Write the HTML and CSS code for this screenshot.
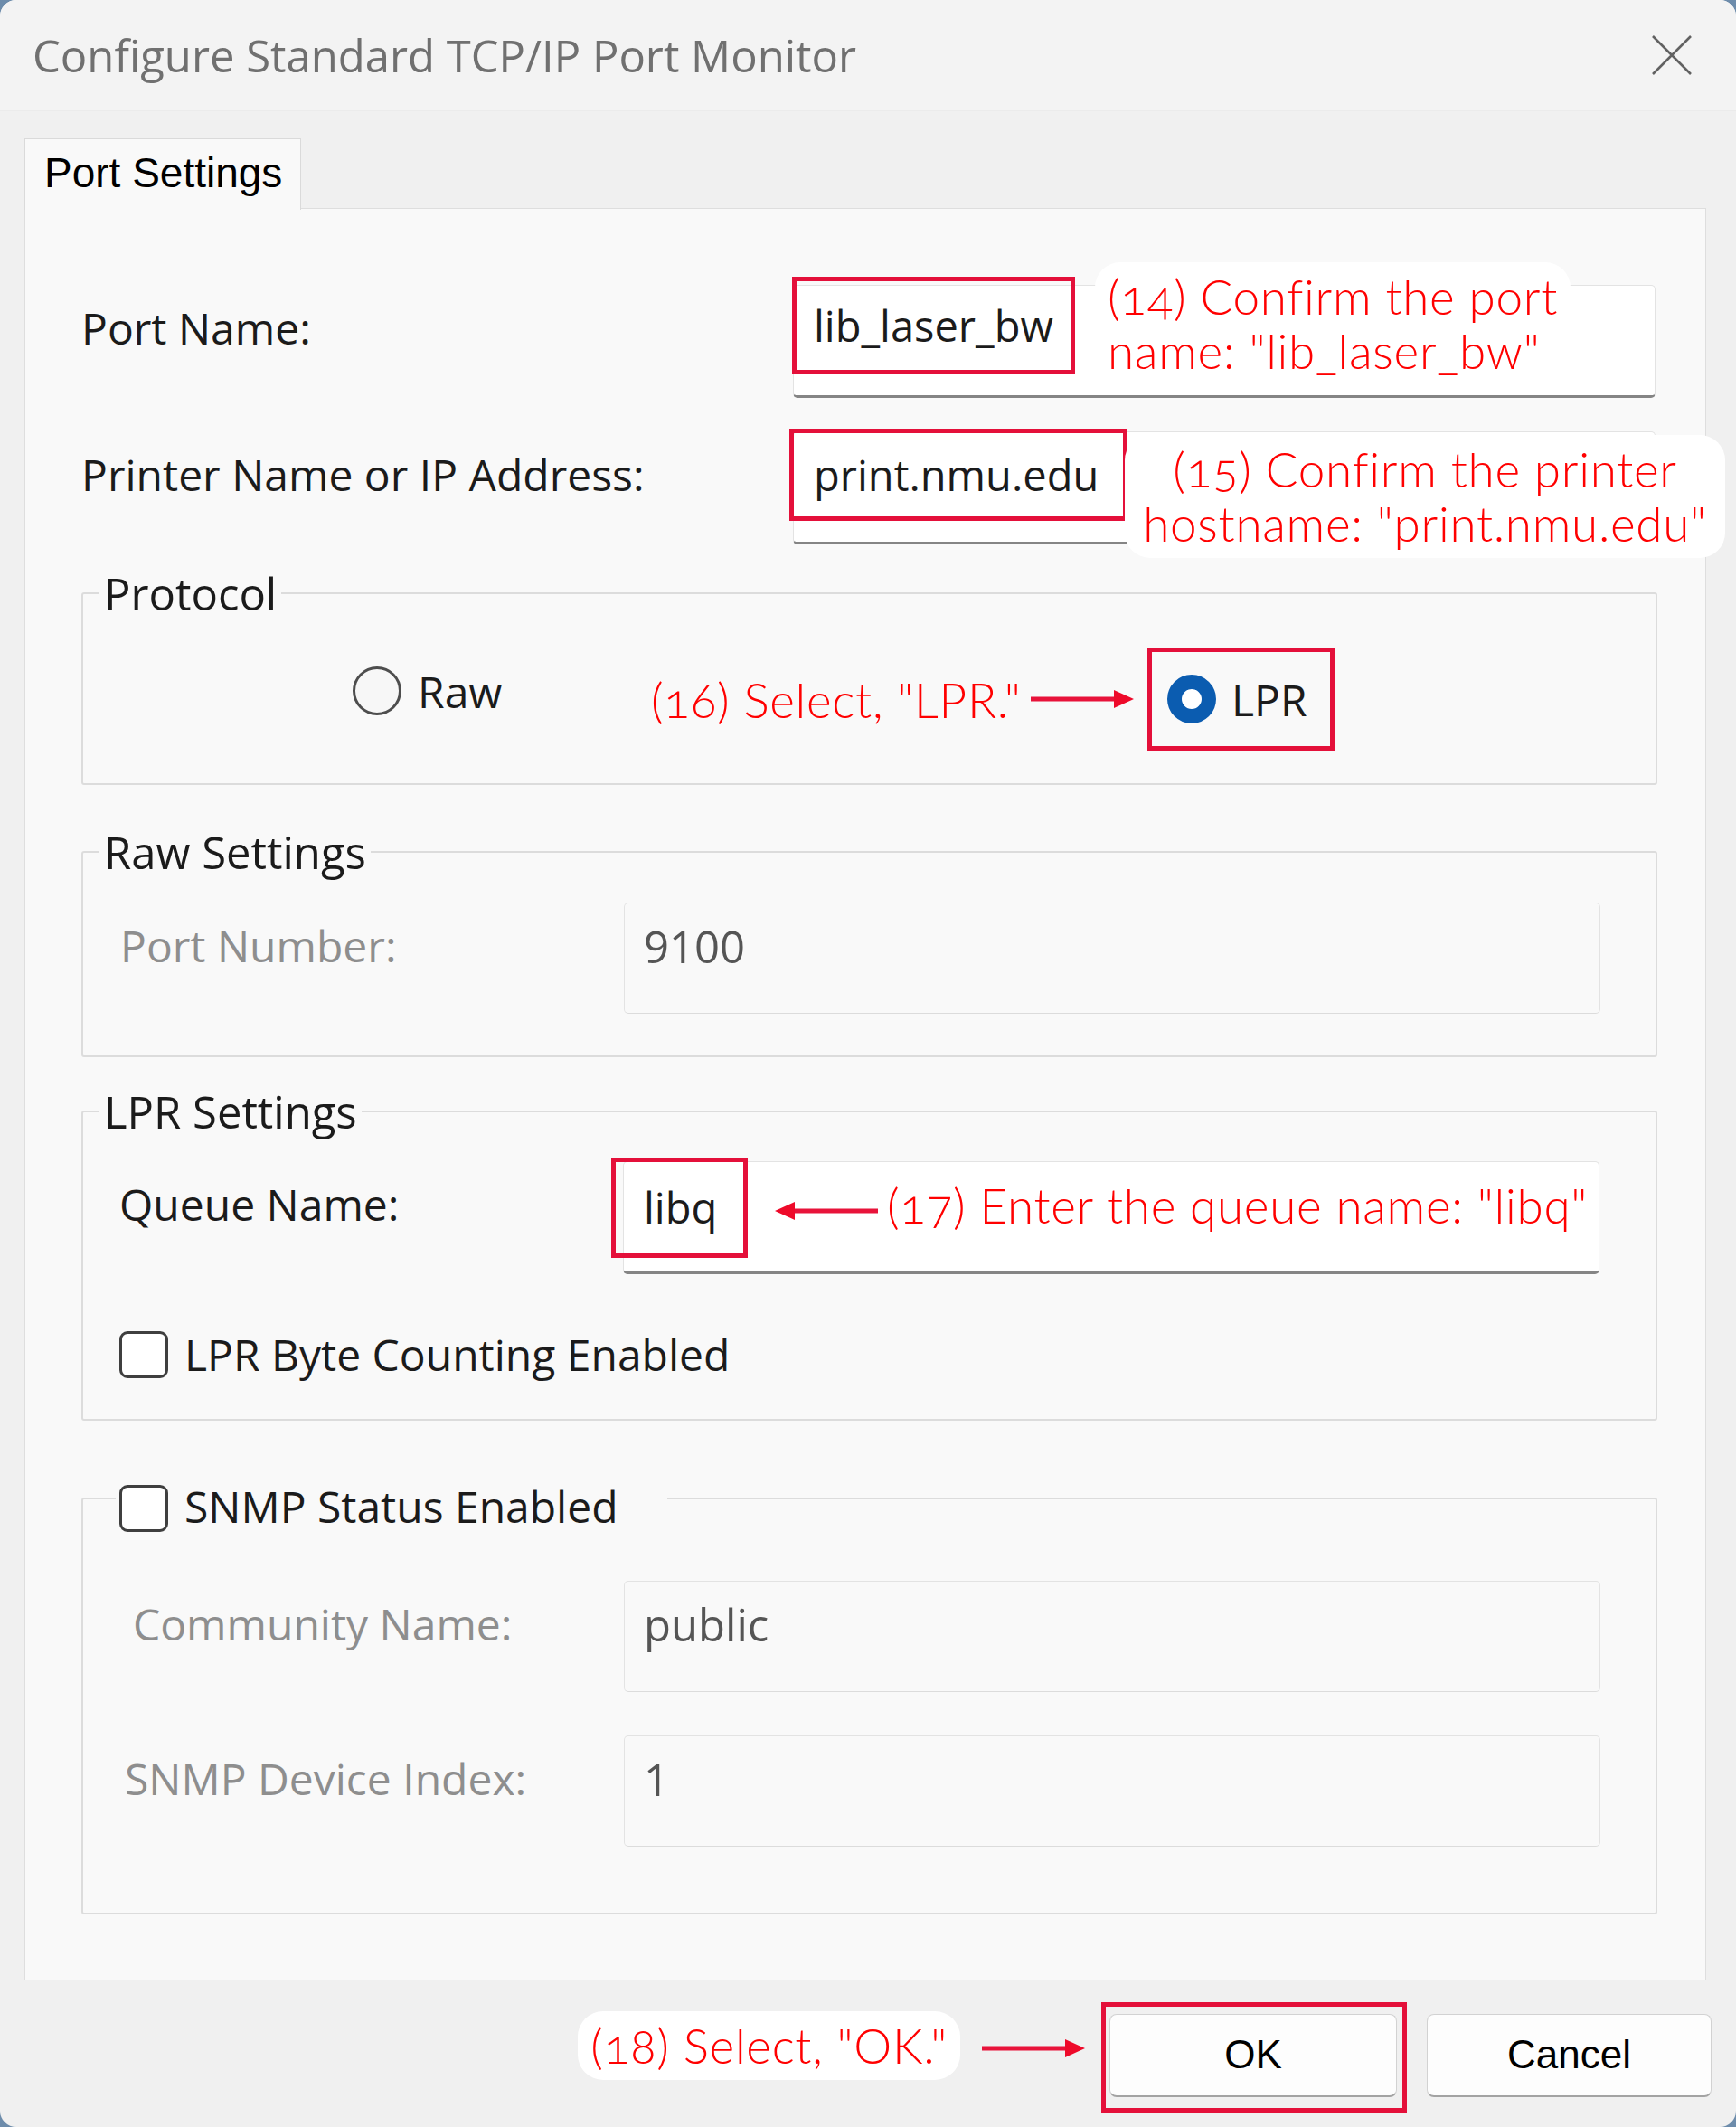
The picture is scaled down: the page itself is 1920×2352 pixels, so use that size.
FILE: index.html
```html
<html>
    <head>
        <title>Configure Standard TCP/IP Port Monitor</title>
        <link rel="stylesheet" href="styles.css">
    </head>
    <body>
        <div id="titlebar">
            <h1 id="title">Configure Standard TCP/IP Port Monitor</h1>
            <div id="close">
                <svg width="46" height="46" viewBox="0 0 46 46"><path d="M2 2 L44 44 M44 2 L2 44" stroke="#616161" stroke-width="2.6" fill="none"/></svg>
            </div>
        </div>
        <div id="main">
            <div class="tabs">
                <div class="tab">Port Settings</div>
            </div>
            <div class="panel">
                <div class="row row-name">
                    <div class="label">Port Name:</div>
                    <div class="field">
                        <span class="mark mark-name">lib_laser_bw</span>
                        <div class="note note-name">(14) Confirm the port<br>name: "lib_laser_bw"</div>
                    </div>
                </div>
                <div class="row row-host">
                    <div class="label">Printer Name or IP Address:</div>
                    <div class="field">
                        <span class="mark mark-host">print.nmu.edu</span>
                        <div class="note note-host">(15) Confirm the printer<br>hostname: "print.nmu.edu"</div>
                    </div>
                </div>

                <fieldset class="group protocol">
                    <legend>Protocol</legend>
                    <div class="group-body">
                        <div class="radios">
                            <div class="opt opt-raw"><span class="radio"></span>Raw</div>
                            <div class="step step-lpr">(16) Select, "LPR."</div>
                            <svg class="arrow" width="114" height="24" viewBox="0 0 114 24"><path d="M0 12 H96" stroke="#e8133a" stroke-width="5"/><path d="M92 2 L114 12 L92 22 Z" fill="#ee0a2a"/></svg>
                            <div class="opt opt-lpr mark"><span class="radio checked"></span>LPR</div>
                        </div>
                    </div>
                </fieldset>

                <fieldset class="group raw">
                    <legend>Raw Settings</legend>
                    <div class="group-body">
                        <div class="grid-row">
                            <div class="label off">Port Number:</div>
                            <div class="field disabled">9100</div>
                        </div>
                    </div>
                </fieldset>

                <fieldset class="group lpr">
                    <legend>LPR Settings</legend>
                    <div class="group-body">
                        <div class="grid-row">
                            <div class="label">Queue Name:</div>
                            <div class="field queue">
                                <span class="mark mark-queue">libq</span>
                                <svg class="arrow arrow-left" width="114" height="24" viewBox="0 0 114 24"><path d="M18 12 H114" stroke="#e8133a" stroke-width="5"/><path d="M22 2 L0 12 L22 22 Z" fill="#ee0a2a"/></svg>
                                <span class="step">(17) Enter the queue name: "libq"</span>
                            </div>
                        </div>
                        <div class="check-row"><span class="check"></span>LPR Byte Counting Enabled</div>
                    </div>
                </fieldset>

                <fieldset class="group snmp">
                    <legend><span class="check"></span>SNMP Status Enabled</legend>
                    <div class="group-body">
                        <div class="grid-row">
                            <div class="label off community">Community Name:</div>
                            <div class="field disabled">public</div>
                        </div>
                        <div class="grid-row">
                            <div class="label off device">SNMP Device Index:</div>
                            <div class="field disabled">1</div>
                        </div>
                    </div>
                </fieldset>
            </div>
            <div class="footer">
                <div class="note note-ok">(18) Select, "OK."</div>
                <svg class="arrow arrow-ok" width="114" height="24" viewBox="0 0 114 24"><path d="M0 12 H96" stroke="#e8133a" stroke-width="5"/><path d="M92 2 L114 12 L92 22 Z" fill="#ee0a2a"/></svg>
                <div class="mark mark-ok"><div class="button">OK</div></div>
                <div class="button cancel">Cancel</div>
            </div>
        </div>
    </body>
</html>
```

FILE: styles.css
```css
html {
    background: #6d8cab;
}
body {
    margin: 0;
    width: 1920px;
    height: 2352px;
    background: #f0f0f0;
    border-radius: 18px;
    overflow: hidden;
    font-family: "Open Sans", "Noto Sans", sans-serif;
    color: #1b1b1b;
}
#titlebar {
    height: 123px;
    box-sizing: border-box;
    background: #f3f3f3;
    border-bottom: 1px solid #ebebeb;
    display: flex;
    align-items: center;
    justify-content: space-between;
    padding: 0 48px 0 36px;
}
#title {
    margin: 0;
    font-size: 49px;
    font-weight: normal;
    color: #707070;
}
#close svg {
    display: block;
}
#main {
    padding: 30px 33px 0 27px;
}
.tabs {
    height: 77px;
    display: flex;
}
.tab {
    position: relative;
    z-index: 1;
    width: 306px;
    height: 79px;
    box-sizing: border-box;
    background: #f9f9f9;
    border: 1px solid #dadada;
    border-bottom: none;
    padding-left: 21px;
    font-family: "Liberation Sans", Arial, sans-serif;
    font-size: 46px;
    line-height: 74px;
    color: #000;
}
.panel {
    height: 1960px;
    box-sizing: border-box;
    background: #f9f9f9;
    border: 1px solid #dedede;
    padding: 84px 53px 0 62px;
}
.row {
    display: grid;
    grid-template-columns: 787px 954px;
}
.row-name {
    margin-bottom: 37px;
}
.row-host {
    margin-bottom: 26px;
}
.label {
    font-size: 48px;
    line-height: 96px;
    white-space: nowrap;
}
.label.off {
    color: #8e8e8e;
}
.field {
    position: relative;
    height: 125px;
    box-sizing: border-box;
    background: #fff;
    border: 1px solid #e3e3e3;
    border-bottom: 3px solid #858585;
    border-radius: 5px;
    font-size: 47px;
}
.field.disabled {
    height: 123px;
    background: #f9f9f9;
    border-bottom: 1px solid #dcdcdc;
    padding-left: 21px;
    line-height: 94px;
    font-size: 49px;
    color: #555;
}
.mark {
    display: inline-block;
    box-sizing: border-box;
    border: 5px solid #e4103a;
}
.mark-name {
    height: 108px;
    margin: -10px 0 0 -2px;
    padding: 0 19px;
    line-height: 98px;
}
.mark-host {
    height: 102px;
    margin: -4px 0 0 -5px;
    padding: 0 27px 0 22px;
    line-height: 92px;
}
.note,
.step {
    font-family: Lato, "Open Sans", sans-serif;
    font-size: 53px;
    font-weight: 300;
    font-variant-numeric: oldstyle-nums;
    letter-spacing: 0.7px;
    color: #ff0000;
    white-space: nowrap;
}
.note {
    position: absolute;
    background: #fff;
    border-radius: 28px;
    padding: 8px 14px;
    line-height: 60px;
}
.note-name {
    left: 333px;
    top: -26px;
}
.note-host {
    left: 366px;
    top: 3px;
    width: 636px;
    text-align: center;
}
.group {
    margin: 0;
    padding: 0;
    min-width: 0;
    border: 2px solid #dcdcdc;
    border-radius: 3px;
}
.group legend {
    margin-left: 18px;
    padding: 0 5px;
    font-size: 49px;
    line-height: 56px;
}
.radios {
    height: 114px;
    display: flex;
    align-items: center;
}
.protocol .group-body {
    padding: 32px 0 36px 298px;
}
.opt {
    display: flex;
    align-items: center;
    font-size: 48px;
}
.opt-raw {
    width: 330px;
    gap: 18px;
    margin-bottom: 18px;
}
.radio {
    width: 54px;
    height: 54px;
    box-sizing: border-box;
    border-radius: 50%;
    border: 3px solid #4e4e4e;
    background: #f7f7f7;
}
.radio.checked {
    border: 16px solid #0b5cb0;
    background: #fff;
}
.step-lpr {
    width: 408px;
}
.arrow {
    display: block;
    flex: none;
}
.radios .arrow {
    margin-left: 12px;
}
.opt-lpr {
    width: 207px;
    height: 114px;
    margin-left: 15px;
    padding-left: 17px;
    gap: 17px;
}
.raw {
    margin-top: 46px;
}
.grid-row {
    display: grid;
    grid-template-columns: 557px 1080px;
}
.raw .group-body {
    padding: 28px 0 46px 41px;
}
.lpr {
    margin-top: 32px;
}
.lpr .group-body {
    padding: 27px 0 45px 40px;
}
.queue {
    display: flex;
    align-items: flex-start;
}
.mark-queue {
    height: 111px;
    margin: -5px 0 0 -14px;
    padding: 0 0 0 31px;
    width: 151px;
    line-height: 101px;
}
.arrow-left {
    margin: 42px 0 0 30px;
}
.queue .step {
    margin: 18px 0 0 10px;
    line-height: 60px;
}
.check-row {
    margin-top: 63px;
    display: flex;
    align-items: center;
    gap: 18px;
    font-size: 48px;
    line-height: 52px;
}
.check {
    display: inline-block;
    width: 54px;
    height: 52px;
    box-sizing: border-box;
    border: 3px solid #3f3f3f;
    border-radius: 9px;
    background: #fff;
}
.snmp {
    margin-top: 49px;
}
.snmp legend {
    margin-left: 36px;
    padding: 18px 54px 0 4px;
    font-size: 48px;
}
.snmp legend .check {
    vertical-align: middle;
    margin: -6px 18px 0 0;
}
.snmp .group-body {
    padding: 54px 0 73px 41px;
}
.snmp .grid-row + .grid-row {
    margin-top: 48px;
}
.community {
    padding-left: 14px;
}
.device {
    padding-left: 5px;
}
.footer {
    display: flex;
    justify-content: flex-end;
    align-items: flex-start;
    padding: 24px 0 0 0;
    margin-right: -33px;
    padding-right: 27px;
}
.note-ok {
    position: static;
    margin-top: 10px;
}
.arrow-ok {
    margin: 39px 18px 0 24px;
}
.mark-ok {
    width: 338px;
    height: 122px;
    padding: 8px 0 0 4px;
}
.button {
    width: 318px;
    height: 92px;
    box-sizing: border-box;
    background: #fdfdfd;
    border: 1px solid #d2d2d2;
    border-bottom: 2px solid #a3a3a3;
    border-radius: 8px;
    text-align: center;
    font-family: "Liberation Sans", Arial, sans-serif;
    font-size: 44px;
    line-height: 88px;
    color: #000;
}
.cancel {
    width: 315px;
    margin: 13px 0 0 22px;
}
```
